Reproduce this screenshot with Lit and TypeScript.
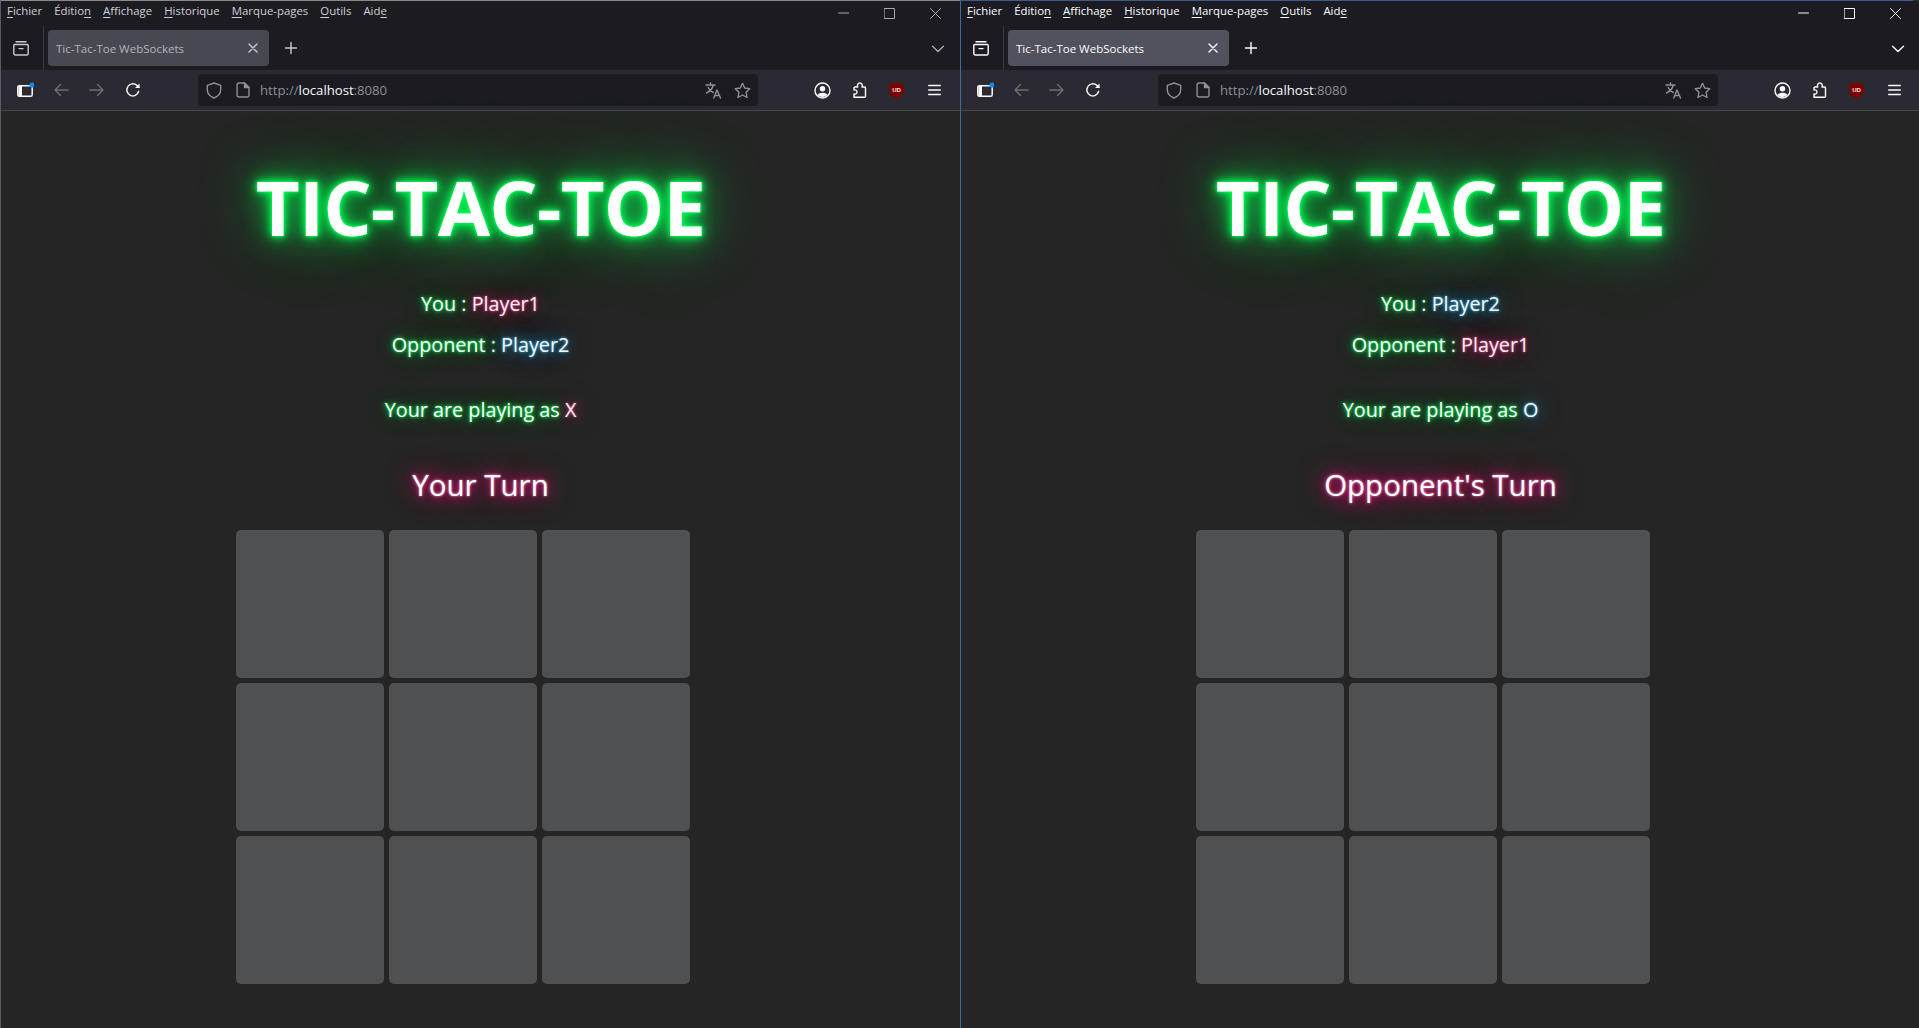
import { LitElement, html, css, svg } from 'lit';
import { customElement, property } from 'lit/decorators.js';

const icon = (w: number, h: number, body: unknown) => html`
  <svg width=${w} height=${h} viewBox="0 0 ${w} ${h}" fill="none" stroke="currentColor" stroke-width="1.4"
    stroke-linecap="round" stroke-linejoin="round">${body}</svg>`;

// toolbar glyphs, drawn by hand to look like the Firefox ones
const icons = {
  view: icon(16, 16, svg`<path d="M3 1.700h10M1.700 4.500h12.600a.9.9 0 0 1 .9.9v8a1.600 1.600 0 0 1-1.600 1.600H2.400a1.600 1.600 0 0 1-1.600-1.600v-8a.9.9 0 0 1 .9-.9zM6 8.600h4"/>`),
  plus: icon(14, 14, svg`<path d="M7 1.500v11M1.500 7h11"/>`),
  close: icon(10, 10, svg`<path d="M1 1l8 8M9 1l-8 8"/>`),
  chevron: icon(14, 8, svg`<path d="M1.500 1.200L7 6.600l5.500-5.400"/>`),
  back: icon(16, 14, svg`<path d="M15 7H2M7.500 1.500L2 7l5.500 5.500"/>`),
  forward: icon(16, 14, svg`<path d="M1 7h13M8.500 1.500L14 7l-5.500 5.500"/>`),
  reload: icon(16, 16, svg`<path d="M13.600 9.500A6 6 0 1 1 11.800 3.300L14 5.200"/><path d="M14.500 1.500v4.500H10z" fill="currentColor" stroke="none"/>`),
  shield: icon(16, 17, svg`<path d="M8 1l6.700 2.300v4.400c0 3.600-2.700 6.600-6.700 8.300-4-1.700-6.700-4.700-6.700-8.300V3.300z"/>`),
  page: icon(14, 16, svg`<path d="M2.800 1h5.700L13 5.500v7.800a1.700 1.700 0 0 1-1.700 1.700H2.800a1.700 1.700 0 0 1-1.700-1.700V2.700A1.700 1.700 0 0 1 2.800 1z"/><path d="M8.500 1v4.500H13z" fill="currentColor"/>`),
  translate: icon(17, 17, svg`<path d="M1 3h9M5.500 1v2M8.300 3c-.8 3.500-3 6.200-6.800 8M3.200 5.500c1 2.200 2.800 4 5 5"/><path d="M8.800 16l3.200-8 3.500 8M10 13.500h4.500"/>`),
  star: icon(17, 17, svg`<path d="M8.500 1.300l2.200 4.700 5.100.7-3.700 3.600.9 5.200-4.500-2.500-4.500 2.500.9-5.200L1.200 6.700l5.100-.7z"/>`),
  profile: icon(17, 17, svg`<circle cx="8.500" cy="8.500" r="7.500"/><circle cx="8.500" cy="6.800" r="2.700" fill="currentColor" stroke="none"/><path d="M3.500 13c1-1.600 2.800-2.300 5-2.300s4 .7 5 2.300c-1.300 1.300-3 2-5 2s-3.700-.7-5-2z" fill="currentColor" stroke="none"/>`),
  puzzle: icon(15, 16, svg`<path d="M2 15.300h10.500a1 1 0 0 0 1-1V6a1 1 0 0 0-1-1H10c.8-2.200-.3-4-2.300-4S5 2.800 5.700 5H3a1 1 0 0 0-1 1v2c1.800-.5 3 .5 3 2s-1.200 2.500-3 2z"/>`),
  ublock: html`<svg width="15" height="17" viewBox="0 0 15 17"><path d="M7.500.5l7 2v6.500c0 3.400-3 6-7 7.500-4-1.500-7-4.100-7-7.500V2.500z" fill="#800000"/><text x="7.500" y="10.300" text-anchor="middle" font-size="6" font-weight="700" font-family="'Liberation Sans', sans-serif" fill="#eee">UD</text></svg>`,
  menu: icon(13, 12, svg`<path d="M.7 1.500h11.600M.7 6h11.600M.7 10.500h11.600"/>`),
  min: icon(11, 2, svg`<path d="M.5 1h10" stroke-width="1"/>`),
  max: icon(11, 11, svg`<rect x=".5" y=".5" width="10" height="10" stroke-width="1"/>`),
  x: icon(11, 11, svg`<path d="M.5.5l10 10M10.500.5l-10 10" stroke-width="1"/>`),
  sidebar: html`<svg width="18" height="16" viewBox="0 0 18 16" fill="none"><rect x="1.800" y="3.700" width="14.400" height="10.600" rx="1.600" stroke="#fbfbfe" stroke-width="1.500"/><path d="M2.500 4h3.500v10H2.500z" fill="#fbfbfe"/><circle cx="16" cy="3" r="2.600" fill="#0090ed"/></svg>`,
};

@customElement('browser-window')
export class BrowserWindow extends LitElement {
  @property() you = '';
  @property() opponent = '';
  @property() youKind = 'p1';
  @property() oppKind = 'p2';
  @property() mark = '';
  @property() turn = '';
  @property({ type: Boolean }) focused = false;

  static styles = css`
    :host { display: block; overflow: hidden; height: 1028px; }
    :host([focused]) { border-top-right-radius: 8px; }
    .win {
      width: 960px; height: 1028px; box-sizing: border-box; display: flex; flex-direction: column; overflow: hidden;
      font-family: "Open Sans", "Noto Sans", sans-serif; background: #252525;
      border-left: 1px solid #5a5a62; border-top: 1px solid #8a8a8a;
    }
    .win.on { border-left-color: #3f6a9e; border-top-color: #3a5b8c; }
    .top { background: #1c1b22; color: #c9c9cc; height: 69px; flex: none; display: flex; flex-direction: column; }
    .on .top { color: #fbfbfe; }
    .menubar { height: 25px; display: flex; align-items: flex-start; position: relative; }
    .menus { display: flex; gap: 12px; padding: 2px 0 0 6px; font-size: 11.400px; line-height: 16px; color: #cfcfd2; }
    .on .menus { color: #fbfbfe; }
    .menus u { text-underline-offset: 2px; }
    .controls { margin-left: auto; display: flex; align-items: center; gap: 35px; padding: 6px 19px 0 0; height: 12px; color: #a9a9ad; }
    .on .controls { color: #fbfbfe; }
    .tabbar { flex: 1; display: flex; align-items: flex-start; }
    .view { width: 43px; height: 44px; border-right: 1px solid #3a3a42; display: flex; align-items: center; justify-content: center; padding-right: 2px; color: #c9c9cc; box-sizing: border-box; }
    .tab {
      margin: 4px 0 0 4px; width: 221px; height: 36px; box-sizing: border-box; border-radius: 4px; background: #484852;
      display: flex; align-items: center; padding: 0 11px 0 8px; font-size: 11.500px; color: #b4b4b8;
    }
    .on .tab { background: #52525e; color: #fbfbfe; }
    .tab span { flex: 1; }
    .tab svg { color: #c9c9cc; }
    .newtab { margin: 12px 0 0 15px; color: #c9c9cc; }
    .list { margin: 19px 15px 0 auto; display: flex; color: #a9a9ad; }
    .on .list, .on .newtab, .on .tab svg, .on .view { color: #fbfbfe; }
    .nav {
      height: 41px; flex: none; box-sizing: border-box; background: #2b2a33; border-bottom: 1px solid #47464e;
      display: flex; align-items: center; color: #fbfbfe;
    }
    .nav > * { flex: none; }
    .side { margin-left: 15px; display: flex; }
    .dim { color: #6f6f76; display: flex; }
    .back { margin-left: 19px; }
    .fwd { margin-left: 20px; }
    .reload { margin-left: 20px; display: flex; }
    .url {
      margin-left: 57px; width: 560px; height: 32px; border-radius: 4px; background: #1c1b22; box-sizing: border-box;
      display: flex; align-items: center; padding: 0 7px 0 8px; font-size: 13.150px; color: #8f8f94;
    }
    .url svg { flex: none; }
    .url .addr { margin-left: 10px; flex: 1; }
    .url .page { margin-left: 14px; display: flex; }
    .url b { font-weight: 400; color: #fbfbfe; }
    .url .tr { margin-right: 12px; display: flex; }
    .tools { margin-left: 56px; display: flex; align-items: center; }
    .tools .a { margin-right: 21px; display: flex; }
    .tools .b { margin-right: 22px; display: flex; }
    .tools .c { margin-right: 24px; display: flex; }

    .page-body { flex: 1; display: flex; flex-direction: column; align-items: center; color: #fff; }
    h1 {
      margin: 46px 0 0; font-size: 76px; line-height: 100px; font-weight: 700; letter-spacing: -.8px;
      text-shadow: 0 0 3px #00ff55, 0 0 7px #00ff55, 0 0 14px #00ff55, 0 0 30px rgba(0, 255, 85, .8), 0 0 60px rgba(0, 255, 85, .5), 0 0 100px rgba(0, 255, 85, .35);
    }
    .info { font-size: 19.800px; line-height: 41px; text-shadow: 0 0 3px #00ff55, 0 0 6px rgba(0, 255, 85, .8), 0 0 22px rgba(0, 255, 85, .45), 0 0 50px rgba(0, 255, 85, .35); }
    .who { margin-top: 26px; }
    .mark { margin-top: 24px; }
    .p1 { text-shadow: 0 0 3px #ff5a9c, 0 0 14px rgba(230, 0, 115, .7), 0 0 26px rgba(230, 0, 115, .5); color: #fdeef4; }
    .p2 { text-shadow: 0 0 3px #5ac8ff, 0 0 14px rgba(0, 168, 230, .7), 0 0 26px rgba(0, 168, 230, .5); color: #eefaff; }
    .turn {
      margin-top: 34px; font-size: 29.500px; line-height: 42px; color: #fff;
      text-shadow: 0 0 3px #ffa0c8, 0 0 8px rgba(230, 0, 115, .8), 0 0 20px #e60073, 0 0 30px rgba(230, 0, 115, .7);
    }
    .board { margin: 24px 35px 0 0; display: grid; grid-template-columns: repeat(3, 148.330px); grid-auto-rows: 148px; gap: 5px; }
    .cell { background: #4f5051; border-radius: 5px; }
  `;

  render() {
    const on = this.focused;
    return html`
      <div class="win ${on ? 'on' : ''}">
        <div class="top">
          <div class="menubar">
            <div class="menus">
              <span><u>F</u>ichier</span><span>Éditio<u>n</u></span><span><u>A</u>ffichage</span><span><u>H</u>istorique</span><span><u>M</u>arque-pages</span><span><u>O</u>utils</span><span>Aid<u>e</u></span>
            </div>
            <div class="controls">${icons.min}${icons.max}${icons.x}</div>
          </div>
          <div class="tabbar">
            <div class="view">${icons.view}</div>
            <div class="tab"><span>Tic-Tac-Toe WebSockets</span>${icons.close}</div>
            <div class="newtab">${icons.plus}</div>
            <div class="list">${icons.chevron}</div>
          </div>
        </div>
        <div class="nav">
          <div class="side">${icons.sidebar}</div>
          <div class="dim back">${icons.back}</div>
          <div class="dim fwd">${icons.forward}</div>
          <div class="reload">${icons.reload}</div>
          <div class="url">
            ${icons.shield}<span class="page">${icons.page}</span>
            <span class="addr">http://<b>localhost</b>:8080</span>
            <span class="tr">${icons.translate}</span>${icons.star}
          </div>
          <div class="tools">
            <span class="a">${icons.profile}</span><span class="b">${icons.puzzle}</span><span class="c">${icons.ublock}</span>${icons.menu}
          </div>
        </div>
        <div class="page-body">
          <h1>TIC-TAC-TOE</h1>
          <div class="info who">You : <span class=${this.youKind}>${this.you}</span></div>
          <div class="info">Opponent : <span class=${this.oppKind}>${this.opponent}</span></div>
          <div class="info mark">Your are playing as <span class=${this.youKind}>${this.mark}</span></div>
          <div class="turn">${this.turn}</div>
          <div class="board">${Array.from({ length: 9 }, () => html`<div class="cell"></div>`)}</div>
        </div>
      </div>
    `;
  }
}

@customElement('app-root')
export class AppRoot extends LitElement {
  static styles = css`
    :host { display: grid; grid-template-columns: 960px 959px; height: 1028px; overflow: hidden; background: #252525; }
  `;

  render() {
    return html`
      <browser-window you="Player1" opponent="Player2" youKind="p1" oppKind="p2" mark="X" turn="Your Turn"></browser-window>
      <browser-window focused you="Player2" opponent="Player1" youKind="p2" oppKind="p1" mark="O" turn="Opponent's Turn"></browser-window>
    `;
  }
}
